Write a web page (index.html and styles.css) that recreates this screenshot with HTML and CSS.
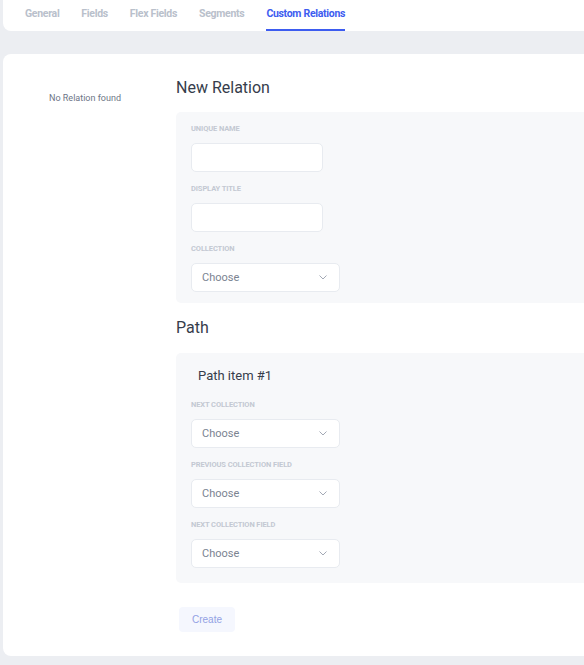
FILE: index.html
```html
<!DOCTYPE html>
<html>
<head>
<meta charset="utf-8">
<link rel="stylesheet" href="styles.css">
</head>
<body>
<div class="page">
  <nav class="tabs">
    <a class="tab">General</a>
    <a class="tab">Fields</a>
    <a class="tab">Flex Fields</a>
    <a class="tab">Segments</a>
    <a class="tab active">Custom Relations</a>
  </nav>
  <main class="card">
    <aside class="side">No Relation found</aside>
    <section class="content">
      <h2 class="heading">New Relation</h2>
      <div class="panel">
        <div class="field">
          <label class="label">Unique name</label>
          <div class="input"></div>
        </div>
        <div class="field">
          <label class="label">Display title</label>
          <div class="input"></div>
        </div>
        <div class="field">
          <label class="label">Collection</label>
          <div class="select"><span>Choose</span><svg class="chev" width="8" height="5" viewBox="0 0 8 5"><path d="M0.5 0.5 L4 4 L7.5 0.5" fill="none" stroke="#a3a9b5" stroke-width="1"/></svg></div>
        </div>
      </div>
      <h2 class="heading path-heading">Path</h2>
      <div class="panel path-panel">
        <h3 class="item-title">Path item #1</h3>
        <div class="field">
          <label class="label">Next collection</label>
          <div class="select"><span>Choose</span><svg class="chev" width="8" height="5" viewBox="0 0 8 5"><path d="M0.5 0.5 L4 4 L7.5 0.5" fill="none" stroke="#a3a9b5" stroke-width="1"/></svg></div>
        </div>
        <div class="field">
          <label class="label">Previous collection field</label>
          <div class="select"><span>Choose</span><svg class="chev" width="8" height="5" viewBox="0 0 8 5"><path d="M0.5 0.5 L4 4 L7.5 0.5" fill="none" stroke="#a3a9b5" stroke-width="1"/></svg></div>
        </div>
        <div class="field">
          <label class="label">Next collection field</label>
          <div class="select"><span>Choose</span><svg class="chev" width="8" height="5" viewBox="0 0 8 5"><path d="M0.5 0.5 L4 4 L7.5 0.5" fill="none" stroke="#a3a9b5" stroke-width="1"/></svg></div>
        </div>
      </div>
      <button class="btn">Create</button>
    </section>
  </main>
</div>
</body>
</html>
```
FILE: styles.css
```css
html, body {
  margin: 0;
  padding: 0;
  overflow: hidden;
  background: #eceef2;
  font-family: Roboto, "Noto Sans", sans-serif;
}
.page {
  width: 680px;
  padding-left: 3px;
  height: 665px;
}
.tabs {
  display: flex;
  gap: 22px;
  height: 31px;
  background: #fff;
  border-radius: 0 0 0 8px;
  padding-left: 22px;
  box-sizing: border-box;
}
.tab {
  font-size: 10.5px;
  font-weight: 700;
  letter-spacing: -0.3px;
  color: #b9c0cb;
  line-height: 27px;
  height: 29px;
  border-bottom: 2px solid transparent;
}
.tab.active {
  color: #3d5cf0;
  border-bottom-color: #3d5cf0;
}
.card {
  margin-top: 23px;
  background: #fff;
  border-radius: 8px 0 0 8px;
  height: 602px;
  display: flex;
  padding-top: 25px;
  box-sizing: border-box;
}
.side {
  width: 164px;
  flex: none;
  text-align: center;
  font-size: 9px;
  color: #6d7586;
  padding-top: 14px;
}
.content {
  margin-left: 9px;
  flex: 1;
}
.heading {
  margin: 0;
  font-size: 16px;
  font-weight: 400;
  line-height: 18px;
  color: #363d4b;
}
.panel {
  margin-top: 15px;
  background: #f7f8fa;
  border-radius: 5px 0 0 5px;
  padding: 12px 15px 11px 15px;
}
.field + .field {
  margin-top: 12px;
}
.label {
  display: block;
  font-size: 7.5px;
  font-weight: 700;
  letter-spacing: -0.1px;
  text-transform: uppercase;
  color: #c3c8d2;
  line-height: 10px;
  margin-bottom: 9px;
}
.input, .select {
  height: 29px;
  box-sizing: border-box;
  background: #fff;
  border: 1px solid #e8ebf0;
  border-radius: 5px;
}
.input {
  width: 132px;
}
.select {
  width: 149px;
  display: flex;
  align-items: center;
  justify-content: space-between;
  padding: 0 12px 0 10px;
  font-size: 11px;
  color: #7b8391;
}
.chev {
  display: block;
}
.path-heading {
  margin-top: 16px;
}
.path-panel {
  margin-top: 16px;
  padding-top: 14px;
  padding-bottom: 15px;
}
.item-title {
  margin: 0 0 15px 7px;
  font-size: 13px;
  font-weight: 400;
  line-height: 18px;
  color: #363d4b;
}
.btn {
  display: block;
  margin: 24px 0 0 3px;
  width: 56px;
  height: 25px;
  border: none;
  border-radius: 4px;
  background: #f5f7fe;
  color: #93a1e4;
  font-family: "Liberation Sans", Arial, sans-serif;
  font-size: 10px;
  padding: 0;
}
```
